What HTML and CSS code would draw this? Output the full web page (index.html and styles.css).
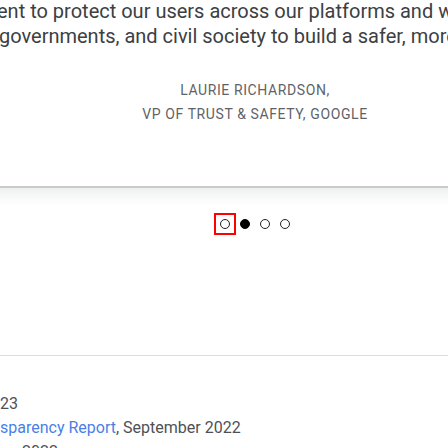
FILE: index.html
```
<!DOCTYPE html>
<html>
<head>
<meta charset="utf-8">
<link rel="stylesheet" href="styles.css">
</head>
<body>
<div class="page">
  <blockquote class="quote">
    <span class="quote-line l1">ent to protect our users across our platforms and work</span>
    <span class="quote-line l2">governments, and civil society to build a safer, more</span>
  </blockquote>
  <div class="attribution">
    <div>LAURIE RICHARDSON,</div>
    <div>VP OF TRUST &amp; SAFETY, GOOGLE</div>
  </div>
  <section class="carousel">
    <div class="dots">
      <button class="dot-btn focused" aria-label="Slide 1"><span class="dot"></span></button>
      <button class="dot-btn" aria-label="Slide 2"><span class="dot active"></span></button>
      <button class="dot-btn" aria-label="Slide 3"><span class="dot"></span></button>
      <button class="dot-btn" aria-label="Slide 4"><span class="dot"></span></button>
    </div>
  </section>
  <hr class="rule">
  <div class="sources">
    <div class="src l1">23</div>
    <div class="src l2"><a href="#">sparency Report</a>, September 2022</div>
    <div class="src l3">2022</div>
  </div>
</div>
</body>
</html>
```
FILE: styles.css
```
html, body {
  margin: 0;
  padding: 0;
  background: #fff;
  overflow: hidden;
  width: 448px;
  height: 448px;
}
.page {
  width: 510px;
}
.quote {
  margin: 0;
  font-family: Roboto, "Liberation Sans", sans-serif;
  font-size: 20px;
  line-height: 25px;
  color: #3c4043;
  white-space: nowrap;
}
.quote-line {
  display: block;
}
.quote-line.l1 { margin-left: -3px; margin-top: -1px; }
.quote-line.l2 { margin-left: -1px; }
.attribution {
  margin-top: 29px;
  text-align: center;
  font-family: Roboto, "Liberation Sans", sans-serif;
  font-size: 14px;
  line-height: 24px;
  letter-spacing: 0.6px;
  color: #5f6368;
}
.carousel {
  box-sizing: border-box;
  margin-top: 60px;
  height: 169px;
  border-top: 2px solid #cacaca;
  background: linear-gradient(#eef0f0, #fbfbfb 12px, #fff 18px);
  padding-top: 26px;
}
.dots {
  display: flex;
  justify-content: center;
}
.dot-btn {
  width: 20px;
  height: 20px;
  border: 0;
  padding: 0;
  margin: 0;
  background: none;
  display: flex;
  align-items: center;
  justify-content: center;
}
.dot-btn.focused {
  outline: 2px solid #ff0000;
  outline-offset: -1px;
}
.dot {
  width: 10px;
  height: 10px;
  box-sizing: border-box;
  border: 1.5px solid #202124;
  border-radius: 50%;
}
.dot.active {
  background: #000;
  border-color: #000;
}
.rule {
  margin: 0;
  border: 0;
  border-top: 1px solid #dadce0;
  height: 0;
}
.sources {
  margin-top: 36px;
  font-family: Roboto, "Liberation Sans", sans-serif;
  font-size: 16px;
  line-height: 24px;
  color: #4d5156;
  white-space: nowrap;
}
.sources a {
  color: #4a7fe8;
  text-decoration: none;
}
.src.l3 {
  padding-left: 22px;
}
```
